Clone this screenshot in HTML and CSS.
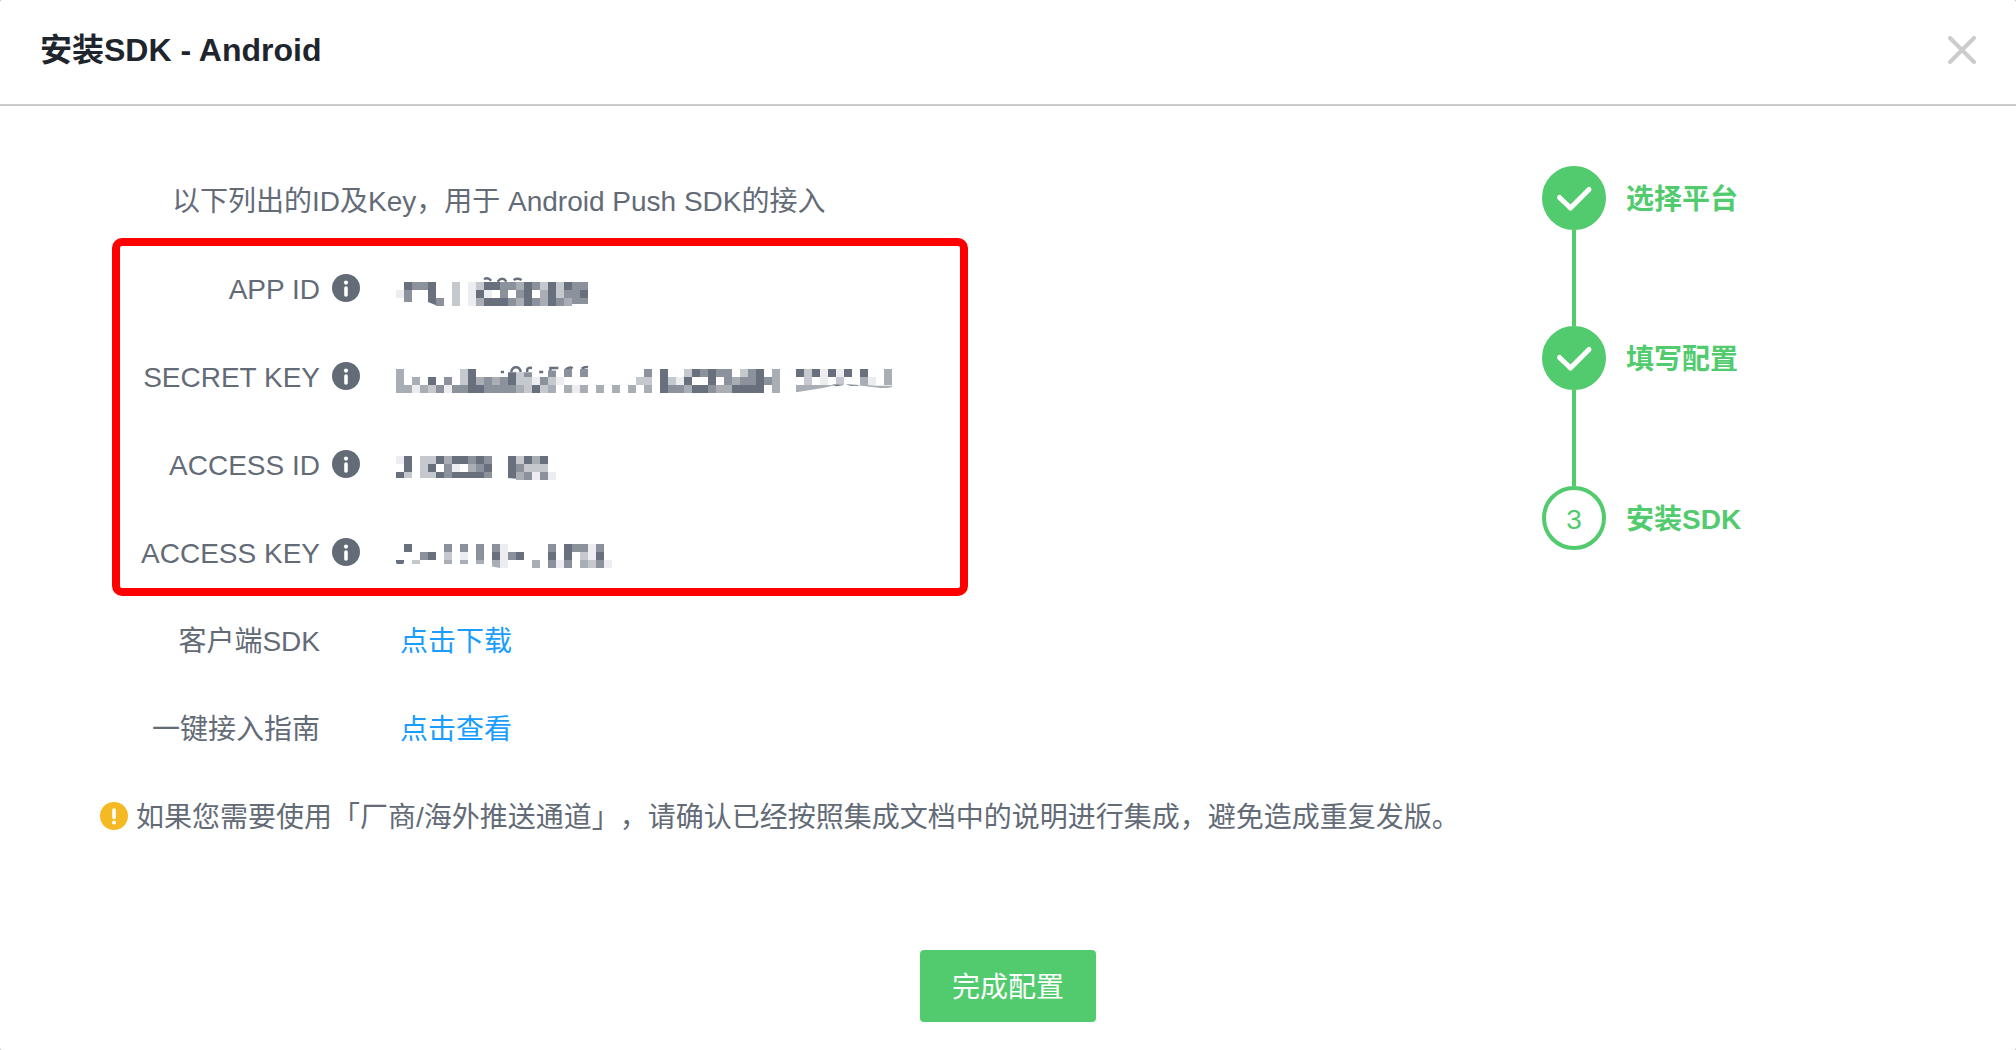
FILE: index.html
```html
<!DOCTYPE html>
<html lang="zh-CN">
<head>
<meta charset="utf-8">
<meta name="viewport" content="width=device-width, initial-scale=1">
<title>安装SDK - Android</title>
<link rel="stylesheet" href="styles.css">
</head>
<body>
<div class="dialog" role="dialog" aria-labelledby="dialog-title">
  <header class="dialog-header">
    <h1 class="dialog-title" id="dialog-title">安装SDK - Android</h1>
    <button class="close" type="button" aria-label="关闭">
      <svg viewBox="0 0 28 28" width="28" height="28"><path d="M2 2l24 24M26 2L2 26" fill="none" stroke="currentColor" stroke-width="4" stroke-linecap="round"/></svg>
    </button>
  </header>

  <svg class="symbols" aria-hidden="true">
    <symbol id="icon-info" viewBox="0 0 28 28">
      <circle cx="14" cy="14" r="14" fill="#636b77"/>
      <circle cx="14" cy="8.6" r="2.1" fill="#fff"/>
      <path d="M14 14v7" stroke="#fff" stroke-width="3.6" stroke-linecap="round"/>
    </symbol>
    <symbol id="icon-check" viewBox="0 0 64 64">
      <path d="M17.500 31.500L28.500 42L47 23.500" fill="none" stroke="#fff" stroke-width="5" stroke-linecap="round" stroke-linejoin="round"/>
    </symbol>
  </svg>

  <main class="dialog-body">
    <section class="config">
      <p class="intro">以下列出的ID及Key，用于 Android Push SDK的接入</p>

      <dl class="fields keys">
        <div class="field">
          <dt class="label">APP ID</dt>
          <dd class="value">
            <svg class="info" role="img" aria-label="说明"><use href="#icon-info"/></svg>
            <svg class="mosaic" viewBox="0 0 64 5" aria-hidden="true">
              <path class="trace" d="M11 1.400q.5-.3.9.2M12.700 1.700q.6-.7 1.100 0M14.700 1.500q.5-.3 1 0"/>
              <g transform="translate(0 1.750)">
                <path class="s1" d="M1 .5h1M4 .5h1M11 .5h2M16 .5h1M19 .5h1M21 .5h1M4 1.500h1M10 1.500h1M16 1.500h1M19 1.500h1M23 1.500h1M11 2.500h3M16 2.500h1M19 2.500h1"/>
                <path class="s2" d="M2 .5h2M14 .5h1M22 .5h1M13 .5h1M17 .5h1M23 .5h1M1 1.500h1M13 1.500h1M15 1.500h1M21 1.500h2M5 2.500h1M14 2.500h1M17 2.500h1M20 2.500h1"/>
                <path class="s3" d="M15 .5h1M18 1.500h1M10 2.500h1M15 2.500h1M18 2.500h1M21 2.500h1"/>
                <path class="s4" d="M7 .5h1M10 .5h1M18 .5h1M20 .5h1M7 1.500h1M20 1.500h1M7 2.500h1"/>
                <path class="s5" d="M9 .5h1M0 1.500h1M9 1.500h1M9 2.500h1M11 1.500h1"/>
                <path fill="#8b929c" d="M1 2h1v.5h-1zM22 2h2v.75h-2z"/>
                <path fill="#67707c" d="M4 2h1v.9l-1-.4z"/>
              </g>
            </svg>
          </dd>
        </div>
        <div class="field">
          <dt class="label">SECRET KEY</dt>
          <dd class="value">
            <svg class="info" role="img" aria-label="说明"><use href="#icon-info"/></svg>
            <svg class="mosaic" viewBox="0 0 64 5" aria-hidden="true">
              <path class="trace" d="M13.100 2h.4M14.400 2q.1-.6.6-.6t.6.600M16.400 2v-.3q.1-.3.6-.2M17.900 2h.5M19.300 2v-.5h1M21.200 1.700q.4-.4.9-.2M23.200 1.600q.4-.3.800-.2"/>
              <g transform="translate(0 1.625)">
                <path class="s1" d="M9 .5h1M33 .5h1M37 .5h1M39 .5h1M45 .5h1M50 .5h1M52 .5h1M54 .5h1M56 .5h1M58 .5h1M4 1.500h1M9 1.500h1M14 1.500h1M33 1.500h1M36 1.500h1M39 1.500h1M45 1.500h1M9 2.500h2M17 2.500h1M33 2.500h1M37 2.500h2M42 2.500h4"/>
                <path class="s2" d="M31 .5h1M38 .5h1M40 .5h2M44 .5h1M6 1.500h1M11 1.500h1M13 1.500h1M18 1.500h1M41 1.500h1M43 1.500h2M46 1.500h1M5 2.500h1M7 2.500h2M11 2.500h4M34 2.500h2M39 2.500h1"/>
                <path class="s3" d="M0 .5h1M47 .5h1M61 .5h1M0 1.500h1M2 1.500h1M10 1.500h1M12 1.500h1M42 1.500h1M47 1.500h1M58 1.500h1M61 1.500h1M0 2.500h2M3 2.500h1M15 2.500h1M19 2.500h1M21 2.500h1M23 2.500h1M25 2.500h1M27 2.500h1M29 2.500h1M31 2.500h1M36 2.500h1M40 2.500h2M47 2.500h1"/>
                <path class="s4" d="M8 .5h1M36 .5h1M43 .5h1M51 .5h1M8 1.500h1M15 1.500h2M19 1.500h1M30 1.500h2M34 1.500h1M51 1.500h1M55 1.500h1M4 2.500h1M16 2.500h1M18 2.500h1"/>
                <path class="s5" d="M53 .5h1M55 .5h1M17 1.500h1M20 1.500h1M35 1.500h1M53 1.500h1M59 1.500h1M2 2.500h1M6 2.500h1M22 2.500h1"/>
                <path fill="#67707c" d="M14 .4h1v.6h-1zM56 2l-1.500-.1.500.25zM56.200 1.900l.6.2h1v-.1z"/>
                <path fill="#8b929c" d="M16 .4h1v.6h-1zM19 .2h1v.8h-1zM21 0h1v1h-1zM23 0h1v1h-1z"/>
                <path fill="#c5c8cd" d="M15 .4h1v.6h-1z"/>
                <path fill="#a9adb4" d="M50 2h5l-1.500.35-2.500.4-1 .15zM57.500 2h1.500l1 .1h2v.15q-.5.2-2 .05z"/>
              </g>
            </svg>
          </dd>
        </div>
        <div class="field">
          <dt class="label">ACCESS ID</dt>
          <dd class="value">
            <svg class="info" role="img" aria-label="说明"><use href="#icon-info"/></svg>
            <svg class="mosaic" viewBox="0 0 64 5" aria-hidden="true">
              <g transform="translate(0 1.500)">
                <path class="s1" d="M1 .5h1M5 .5h1M7 .5h2M10 .5h1M14 .5h1M16 .5h1M18 .5h1M1 1.500h1M4 1.500h1M11 1.500h1M14 1.500h1"/>
                <path class="s2" d="M9 .5h1M11 .5h1M6 1.500h1M10 1.500h1M15 1.500h1M16 2.500h1M18 2.500h1"/>
                <path class="s3" d="M6 .5h1M17 .5h1M9 1.500h1M15 2.500h1"/>
                <path class="s4" d="M3 .5h2M15 .5h1M3 1.500h1M16 1.500h3"/>
                <path class="s5" d="M0 .5h1M7 1.500h1M17 2.500h1M19 2.500h1"/>
                <path fill="#67707c" d="M0 2h1v.75h-1zM5 2h1v.75h-1zM7 2h4v.75h-4zM14 2h1v.85l-1-.1z"/>
                <path fill="#8b929c" d="M6 2h1v.75h-1zM11 2h1v.75h-1z"/>
                <path fill="#c5c8cd" d="M1 2h1v.75h-1zM3 2h2v.75h-2z"/>
              </g>
            </svg>
          </dd>
        </div>
        <div class="field">
          <dt class="label">ACCESS KEY</dt>
          <dd class="value">
            <svg class="info" role="img" aria-label="说明"><use href="#icon-info"/></svg>
            <svg class="mosaic" viewBox="0 0 64 5" aria-hidden="true">
              <g transform="translate(0 1.500)">
                <path class="s1" d="M1 .5h1M21 .5h1M4 1.500h1M12 1.500h1M19 1.500h1M15 1.500h1M21 1.500h1M25 1.500h1"/>
                <path class="s2" d="M6 .5h1M8 .5h1M10 .5h1M12 .5h1M19 .5h1M22 .5h2M25 .5h1M3 1.500h1M10 1.500h1M14 1.500h1M19 2.500h1M21 2.500h1M25 2.500h1"/>
                <path class="s3" d="M17 2.500h1M23 2.500h1"/>
                <path class="s4" d="M6 1.500h1M23 1.500h1M24 2.500h1"/>
                <path class="s5" d="M13 .5h1M24 .5h1M8 1.500h1M13 1.500h1M24 1.500h1M13 2.500h1M20 2.500h1M26 2.500h1"/>
                <path fill="#67707c" d="M0 2h1v.4l-.2.100h-.6l-.2-.1z"/>
                <path fill="#c5c8cd" d="M2 2h1v.5h-1z"/>
                <path fill="#a9adb4" d="M6 2h1v.5h-1zM8 2h1v.5h-1zM10 2h1v.5h-1zM12 2h1v1l-1-.2z"/>
              </g>
            </svg>
          </dd>
        </div>
      </dl>

      <dl class="fields">
        <div class="field">
          <dt class="label">客户端SDK</dt>
          <dd class="value"><a class="link" href="#download">点击下载</a></dd>
        </div>
        <div class="field">
          <dt class="label">一键接入指南</dt>
          <dd class="value"><a class="link" href="#guide">点击查看</a></dd>
        </div>
      </dl>

      <p class="notice">
        <svg class="notice-icon" viewBox="0 0 28 28" aria-hidden="true"><circle cx="14" cy="14" r="14" fill="#f5b924"/><path d="M14 8v7.500" stroke="#fff" stroke-width="3.600" stroke-linecap="round"/><circle cx="14" cy="20.500" r="2" fill="#fff"/></svg>
        <span class="notice-text">如果您需要使用「厂商/海外推送通道」，请确认已经按照集成文档中的说明进行集成，避免造成重复发版。</span>
      </p>
    </section>

    <ol class="steps">
      <li class="step"><span class="marker done"><svg width="64" height="64" role="img" aria-label="已完成"><use href="#icon-check"/></svg></span><span class="step-name">选择平台</span></li>
      <li class="step"><span class="marker done"><svg width="64" height="64" role="img" aria-label="已完成"><use href="#icon-check"/></svg></span><span class="step-name">填写配置</span></li>
      <li class="step" aria-current="step"><span class="marker current">3</span><span class="step-name">安装SDK</span></li>
    </ol>
  </main>

  <footer class="dialog-footer">
    <button class="primary" type="button">完成配置</button>
  </footer>
</div>
</body>
</html>
```

FILE: styles.css
```css
*,
*::after {
  box-sizing: border-box;
}

body {
  margin: 0;
  background: #ababab;
  color: #636b77;
  font-family: "Liberation Sans", "Noto Sans CJK SC", sans-serif;
  font-size: 28px;
  line-height: 40px;
  text-spacing-trim: space-all;
}

h1, p, dl, dd, ol {
  margin: 0;
  padding: 0;
}

button {
  border: 0;
  padding: 0;
  font: inherit;
  cursor: pointer;
}

svg {
  display: block;
}

.symbols {
  display: none;
}

.dialog {
  min-height: 100vh;
  background: #fff;
  border-radius: 2px;
}

.dialog-header {
  display: flex;
  align-items: center;
  justify-content: space-between;
  padding: 30px 40px 34px;
  border-bottom: 2px solid #ccc;
}

.dialog-title {
  color: #1f252d;
  font-size: 32px;
  line-height: 40px;
}

.close {
  background: none;
  color: #ccc;
}

.dialog-body {
  display: grid;
  grid-template-columns: 1fr 474px;
  padding-top: 50px;
}

.intro {
  padding: 26px 0 22px 172px;
}

.keys {
  position: relative;
}

/* Red frame drawn over the credentials */
.keys::after {
  content: "";
  position: absolute;
  top: -6px;
  bottom: 0;
  left: 112px;
  width: 856px;
  border: 8px solid #f00;
  border-radius: 10px;
  pointer-events: none;
}

.field {
  display: grid;
  grid-template-columns: 320px 1fr;
  align-items: center;
  height: 88px;
}

.label {
  padding-top: 4px;
  text-align: right;
}

.value {
  display: flex;
  align-items: center;
  gap: 36px;
  padding-left: 12px;
}

.info {
  width: 28px;
  height: 28px;
}

.mosaic {
  width: 512px;
  height: 40px;
  fill: none;
}

.s1, .s2, .s3, .s4, .s5 {
  stroke-width: 1;
}

.s1 { stroke: #67707c; }
.s2 { stroke: #8b929c; }
.s3 { stroke: #a9adb4; }
.s4 { stroke: #c5c8cd; }
.s5 { stroke: #ecedf0; }

.trace {
  stroke: #67707c;
  stroke-width: 0.3;
}

.link {
  padding: 4px 0 0 68px;
  color: #1a9dff;
  text-decoration: none;
}

.notice {
  display: flex;
  align-items: center;
  gap: 8px;
  height: 88px;
  padding-left: 100px;
}

.notice-text {
  padding-top: 4px;
}

.notice-icon {
  flex: none;
  width: 28px;
  height: 28px;
}

.steps {
  display: flex;
  flex-direction: column;
  gap: 96px;
  padding-top: 10px;
  list-style: none;
}

.step {
  position: relative;
  display: flex;
  align-items: center;
  gap: 20px;
  color: #52cb6e;
  font-weight: bold;
}

.step-name {
  padding-top: 4px;
}

/* Line that joins a step to the next one */
.step:not(:last-child)::after {
  content: "";
  position: absolute;
  top: 64px;
  left: 30px;
  width: 4px;
  height: 96px;
  background: #52cb6e;
}

.marker {
  display: flex;
  align-items: center;
  justify-content: center;
  width: 64px;
  height: 64px;
  border: 4px solid #52cb6e;
  border-radius: 50%;
  font-weight: normal;
}

.current {
  padding-top: 4px;
}

.done {
  background: #52cb6e;
}

.done svg {
  flex: none;
}

.dialog-footer {
  display: flex;
  justify-content: center;
  padding: 90px 0 28px;
}

.primary {
  padding: 18px 32px 14px;
  border-radius: 4px;
  background: #52cb6e;
  color: #fff;
}
```
